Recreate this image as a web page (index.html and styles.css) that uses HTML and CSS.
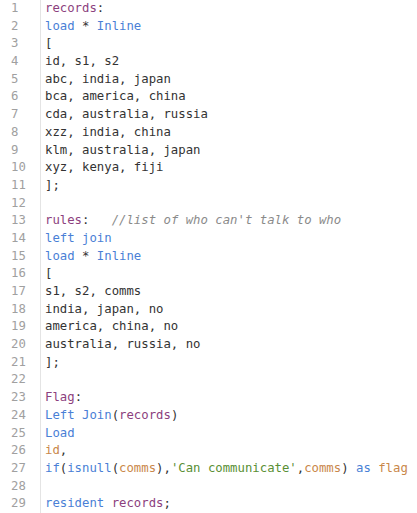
FILE: index.html
```html
<!DOCTYPE html>
<html>
<head>
<meta charset="utf-8">
<link rel="stylesheet" href="styles.css">
</head>
<body>
<div class="editor">
<div class="gutter">
<div>1</div><div>2</div><div>3</div><div>4</div><div>5</div><div>6</div><div>7</div><div>8</div><div>9</div><div>10</div><div>11</div><div>12</div><div>13</div><div>14</div><div>15</div><div>16</div><div>17</div><div>18</div><div>19</div><div>20</div><div>21</div><div>22</div><div>23</div><div>24</div><div>25</div><div>26</div><div>27</div><div>28</div><div>29</div>
</div>
<div class="code">
<div class="ln"><span class="lbl">records</span>:</div>
<div class="ln"><span class="kw">load</span> * <span class="kw">Inline</span></div>
<div class="ln">[</div>
<div class="ln">id, s1, s2</div>
<div class="ln">abc, india, japan</div>
<div class="ln">bca, america, china</div>
<div class="ln">cda, australia, russia</div>
<div class="ln">xzz, india, china</div>
<div class="ln">klm, australia, japan</div>
<div class="ln">xyz, kenya, fiji</div>
<div class="ln">];</div>
<div class="ln">&nbsp;</div>
<div class="ln"><span class="lbl">rules</span>:   <span class="cm">//list of who can't talk to who</span></div>
<div class="ln"><span class="kw">left</span> <span class="kw">join</span></div>
<div class="ln"><span class="kw">load</span> * <span class="kw">Inline</span></div>
<div class="ln">[</div>
<div class="ln">s1, s2, comms</div>
<div class="ln">india, japan, no</div>
<div class="ln">america, china, no</div>
<div class="ln">australia, russia, no</div>
<div class="ln">];</div>
<div class="ln">&nbsp;</div>
<div class="ln"><span class="lbl">Flag</span>:</div>
<div class="ln"><span class="kw">Left</span> <span class="kw">Join</span>(<span class="lbl">records</span>)</div>
<div class="ln"><span class="kw">Load</span></div>
<div class="ln"><span class="fld">id</span>,</div>
<div class="ln"><span class="kw">if</span>(<span class="kw">isnull</span>(<span class="fld">comms</span>),<span class="str">'Can communicate'</span>,<span class="fld">comms</span>) <span class="kw">as</span> <span class="fld">flag</span></div>
<div class="ln">&nbsp;</div>
<div class="ln"><span class="kw">resident</span> <span class="lbl">records</span>;</div>
</div>
</div>
</body>
</html>
```
FILE: styles.css
```css
html, body {
  margin: 0;
  padding: 0;
  background: #ffffff;
}
.editor {
  display: flex;
  font-family: "DejaVu Sans Mono", "Liberation Mono", monospace;
  font-size: 12.3px;
  line-height: 17.68px;
  color: #333333;
}
.gutter {
  width: 29px;
  padding-left: 11px;
  border-right: 1px solid #e4e4e4;
  color: #a0a0a0;
}
.code {
  padding-left: 4px;
}
.ln {
  white-space: pre;
}
.kw { color: #4a7fd6; }
.lbl { color: #8c3f7e; }
.fld { color: #c9874a; }
.str { color: #5a8f35; }
.cm { color: #8a8a8a; font-style: italic; }
```
